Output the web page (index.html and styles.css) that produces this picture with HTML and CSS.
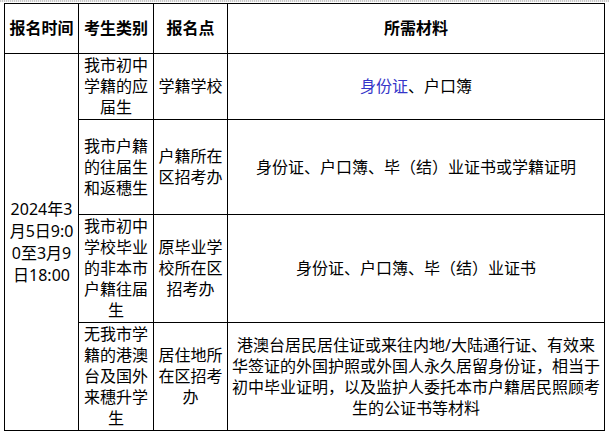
FILE: index.html
```html
<!DOCTYPE html>
<html lang="zh-CN">
<head>
<meta charset="utf-8">
<title>报名时间</title>
<link rel="stylesheet" href="styles.css">
</head>
<body>
<div class="topline"></div>
<table class="reg">
  <colgroup>
    <col class="c1"><col class="c2"><col class="c3"><col class="c4">
  </colgroup>
  <thead>
    <tr class="head">
      <th>报名时间</th>
      <th>考生类别</th>
      <th>报名点</th>
      <th>所需材料</th>
    </tr>
  </thead>
  <tbody>
    <tr class="r1">
      <td rowspan="4" class="time">2024年3<br>月5日9:0<br>0至3月9<br>日18:00</td>
      <td>我市初中<br>学籍的应<br>届生</td>
      <td>学籍学校</td>
      <td><span class="link">身份证</span>、户口簿</td>
    </tr>
    <tr class="r2">
      <td>我市户籍<br>的往届生<br>和返穗生</td>
      <td>户籍所在<br>区招考办</td>
      <td>身份证、户口簿、毕（结）业证书或学籍证明</td>
    </tr>
    <tr class="r3">
      <td>我市初中<br>学校毕业<br>的非本市<br>户籍往届<br>生</td>
      <td>原毕业学<br>校所在区<br>招考办</td>
      <td>身份证、户口簿、毕（结）业证书</td>
    </tr>
    <tr class="r4">
      <td>无我市学<br>籍的港澳<br>台及国外<br>来穗升学<br>生</td>
      <td>居住地所<br>在区招考<br>办</td>
      <td>港澳台居民居住证或来往内地/大陆通行证、有效来<br>华签证的外国护照或外国人永久居留身份证，相当于<br>初中毕业证明，以及监护人委托本市户籍居民照顾考<br>生的公证书等材料</td>
    </tr>
  </tbody>
</table>
</body>
</html>
```

FILE: styles.css
```css
html, body {
  margin: 0;
  padding: 0;
  background: #ffffff;
}

body {
  font-family: "Noto Sans", "Noto Sans CJK SC", sans-serif;
  color: #000000;
  font-size: 16px;
}

.topline {
  height: 2px;
  margin-bottom: 1px;
  background: repeating-linear-gradient(90deg, #c8c8c8 0 1px, #ececec 1px 2px);
}

.reg {
  width: 600px;
  margin-left: 4px;
  border-collapse: collapse;
  table-layout: fixed;
}

.c1 { width: 74px; }
.c2 { width: 75px; }
.c3 { width: 74px; }
.c4 { width: 377px; }

.reg th,
.reg td {
  border: 1px solid #000000;
  padding: 1px 0;
  text-align: center;
  vertical-align: middle;
  line-height: 21px;
  white-space: nowrap;
}

.reg th {
  font-weight: 700;
  height: 47px;
}

.reg .time {
  line-height: 22px;
}

.r2 td { height: 92px; }

.link {
  color: #3535c8;
}
```
